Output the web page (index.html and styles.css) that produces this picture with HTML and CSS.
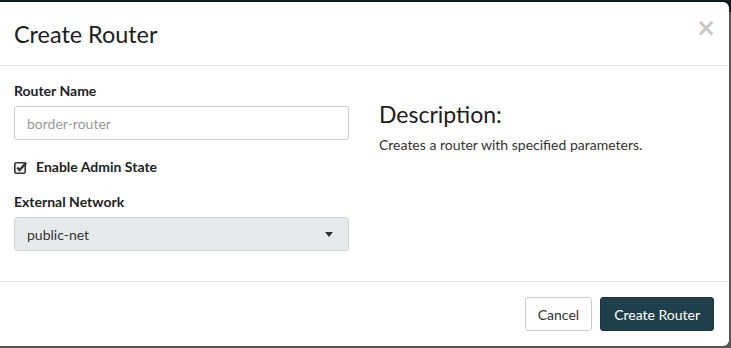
FILE: index.html
```html
<!DOCTYPE html>
<html lang="en">
  <head>
    <meta charset="UTF-8" />
    <title>Create Router</title>
    <link rel="stylesheet" href="styles.css">
  </head>
  <body>
    <div class="modal">
      <div class="modal-header">
        <h4 class="modal-title">Create Router</h4>
        <button class="close" type="button">&times;</button>
      </div>

      <div class="modal-body">
        <div class="col-form">
          <div class="form-group">
            <label for="name">Router Name</label>
            <input type="text" id="name" placeholder="border-router" />
          </div>
          <div class="checkbox">
            <svg class="check-icon" width="13" height="13" viewBox="0 0 13 13">
              <rect x="0.8" y="1.8" width="10.4" height="10.4" rx="1.5" fill="none" stroke="#333" stroke-width="1.6" />
              <path d="M3.2 6.6 L5.6 9.1 L12.2 1.8" fill="none" stroke="#333" stroke-width="2.3" />
            </svg>
            <span>Enable Admin State</span>
          </div>
          <div class="form-group">
            <label for="network">External Network</label>
            <div class="select" id="network">
              <span>public-net</span>
              <span class="caret"></span>
            </div>
          </div>
        </div>

        <div class="col-help">
          <h3>Description:</h3>
          <p>Creates a router with specified parameters.</p>
        </div>
      </div>

      <div class="modal-footer">
        <button class="btn btn-default" type="button">Cancel</button>
        <button class="btn btn-primary" type="button">Create Router</button>
      </div>
    </div>
  </body>
</html>
```

FILE: styles.css
```css
/* Page / backdrop */
body {
  margin: 0;
  font-family: "Lato", "Open Sans", sans-serif;
  font-size: 14px;
  color: #333;
  background: linear-gradient(#0e1c20 0 12px, #565656 12px);
  height: 348px;
  overflow: hidden;
}

/* Modal */
.modal {
  width: 729px;
  margin-top: 2px;
  background: #fff;
  border-radius: 0 6px 6px 0;
}

.modal-header {
  display: flex;
  justify-content: space-between;
  align-items: flex-start;
  padding: 15px 14px 14px 14px;
  border-bottom: 1px solid #e5e5e5;
}

.modal-title {
  margin: 0;
  font-size: 23.4px;
  font-weight: 400;
  line-height: 34px;
  color: #1c1c1c;
}

.close {
  background: none;
  border: none;
  padding: 0;
  margin-top: 1px;
  margin-right: -1px;
  font-family: "DejaVu Sans", sans-serif;
  font-size: 24px;
  font-weight: bold;
  line-height: 20px;
  color: #c8c8c8;
  cursor: pointer;
}

/* Body */
.modal-body {
  display: flex;
  padding: 15px 14px 14px 14px;
  height: 186px;
  border-bottom: 1px solid #e5e5e5;
}

.col-form {
  width: 335px;
}

.col-help {
  margin-left: 30px;
}

.form-group {
  margin-bottom: 14px;
}

label {
  display: block;
  font-weight: bold;
  margin-bottom: 5px;
  line-height: 20px;
  color: #222;
}

input {
  box-sizing: border-box;
  width: 335px;
  height: 34px;
  padding: 6px 12px;
  border: 1px solid #ccc;
  border-radius: 3px;
  font-family: inherit;
  font-size: 14px;
  color: #333;
}

input::placeholder {
  color: #999;
}

.checkbox {
  display: flex;
  align-items: center;
  gap: 9px;
  margin: 18px 0 16px;
  font-weight: bold;
  color: #222;
  line-height: 18px;
}

.check-icon {
  display: block;
}

.select {
  box-sizing: border-box;
  display: flex;
  justify-content: space-between;
  align-items: center;
  width: 335px;
  height: 34px;
  padding: 0 12px 0 12px;
  background: #e7eaeb;
  border: 1px solid #d3d6d7;
  border-radius: 3px;
  color: #333;
}

.caret {
  width: 0;
  height: 0;
  margin-right: 3px;
  border-left: 4px solid transparent;
  border-right: 4px solid transparent;
  border-top: 5px solid #333;
}

.col-help h3 {
  margin: 20px 0 8px;
  font-size: 23px;
  font-weight: 400;
  line-height: 26px;
  color: #1c1c1c;
}

.col-help p {
  margin: 0;
  line-height: 20px;
}

/* Footer */
.modal-footer {
  display: flex;
  justify-content: flex-end;
  gap: 8px;
  padding: 15px 15px 15px;
}

.btn {
  height: 34px;
  padding: 0 12px;
  border-radius: 3px;
  font-family: inherit;
  font-size: 14px;
  cursor: pointer;
}

.btn-default {
  background: #fff;
  border: 1px solid #ccc;
  color: #333;
}

.btn-primary {
  padding: 0 13px;
  background: #1f3f4c;
  border: 1px solid #173540;
  color: #fff;
}
```
